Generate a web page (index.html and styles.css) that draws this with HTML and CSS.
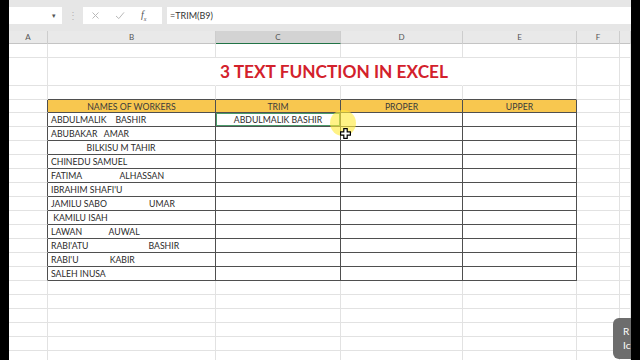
FILE: index.html
```html
<!DOCTYPE html>
<html lang="en">
<head>
    <meta charset="UTF-8">
    <meta name="viewport" content="width=device-width, initial-scale=1.0">
    <title>3 Text Function in Excel</title>
    <link rel="stylesheet" href="styles.css">
</head>
<body>
    <div class="screen">
        <!-- barra della formula -->
        <div class="formula-bar">
            <div class="name-box"><span class="arrow">&#9662;</span></div>
            <div class="grip">&#8942;</div>
            <div class="fx-box">
                <svg class="ico" width="9" height="9" viewBox="0 0 9 9"><path d="M1.5 1.5 L7.5 7.5 M7.5 1.5 L1.5 7.5" stroke="#b9b9b9" stroke-width="1" fill="none"/></svg>
                <svg class="ico" width="10" height="9" viewBox="0 0 10 9"><path d="M1 5 L3.8 7.6 L9 1.4" stroke="#b9b9b9" stroke-width="1" fill="none"/></svg>
                <span class="fx">f<sub>x</sub></span>
            </div>
            <div class="formula">=TRIM(B9)</div>
        </div>

        <div class="col-heads">
            <div class="ch">A</div>
            <div class="ch">B</div>
            <div class="ch active">C</div>
            <div class="ch">D</div>
            <div class="ch">E</div>
            <div class="ch">F</div>
            <div class="ch"></div>
        </div>

        <div class="sheet">
            <div class="row"><div class="c"></div><div class="c"></div><div class="c"></div><div class="c"></div><div class="c"></div><div class="c"></div><div class="c"></div></div>
            <div class="row tall"><div class="c"></div><div class="c no-r"></div><div class="c no-r"><span class="title">3 TEXT FUNCTION IN EXCEL</span></div><div class="c no-r"></div><div class="c"></div><div class="c"></div><div class="c"></div></div>
            <div class="row"><div class="c"></div><div class="c edge-b"></div><div class="c edge-b"></div><div class="c edge-b"></div><div class="c edge-b"></div><div class="c"></div><div class="c"></div></div>

            <div class="row head"><div class="c edge-r"></div><div class="c t hd">NAMES OF WORKERS</div><div class="c t hd">TRIM</div><div class="c t hd">PROPER</div><div class="c t hd">UPPER</div><div class="c"></div><div class="c"></div></div>

            <div class="row"><div class="c edge-r"></div><div class="c t">ABDULMALIK    BASHIR</div><div class="c t ctr sel">ABDULMALIK BASHIR</div><div class="c t"></div><div class="c t"></div><div class="c"></div><div class="c"></div></div>
            <div class="row"><div class="c edge-r"></div><div class="c t">ABUBAKAR   AMAR</div><div class="c t"></div><div class="c t"></div><div class="c t"></div><div class="c"></div><div class="c"></div></div>
            <div class="row"><div class="c edge-r"></div><div class="c t">                BILKISU M TAHIR</div><div class="c t"></div><div class="c t"></div><div class="c t"></div><div class="c"></div><div class="c"></div></div>
            <div class="row"><div class="c edge-r"></div><div class="c t">CHINEDU SAMUEL</div><div class="c t"></div><div class="c t"></div><div class="c t"></div><div class="c"></div><div class="c"></div></div>
            <div class="row"><div class="c edge-r"></div><div class="c t">FATIMA                 ALHASSAN</div><div class="c t"></div><div class="c t"></div><div class="c t"></div><div class="c"></div><div class="c"></div></div>
            <div class="row"><div class="c edge-r"></div><div class="c t">IBRAHIM SHAFI'U</div><div class="c t"></div><div class="c t"></div><div class="c t"></div><div class="c"></div><div class="c"></div></div>
            <div class="row"><div class="c edge-r"></div><div class="c t">JAMILU SABO                   UMAR</div><div class="c t"></div><div class="c t"></div><div class="c t"></div><div class="c"></div><div class="c"></div></div>
            <div class="row"><div class="c edge-r"></div><div class="c t"> KAMILU ISAH</div><div class="c t"></div><div class="c t"></div><div class="c t"></div><div class="c"></div><div class="c"></div></div>
            <div class="row"><div class="c edge-r"></div><div class="c t">LAWAN            AUWAL</div><div class="c t"></div><div class="c t"></div><div class="c t"></div><div class="c"></div><div class="c"></div></div>
            <div class="row"><div class="c edge-r"></div><div class="c t">RABI'ATU                           BASHIR</div><div class="c t"></div><div class="c t"></div><div class="c t"></div><div class="c"></div><div class="c"></div></div>
            <div class="row"><div class="c edge-r"></div><div class="c t">RABI'U              KABIR</div><div class="c t"></div><div class="c t"></div><div class="c t"></div><div class="c"></div><div class="c"></div></div>
            <div class="row"><div class="c edge-r"></div><div class="c t">SALEH INUSA</div><div class="c t"></div><div class="c t"></div><div class="c t"></div><div class="c"></div><div class="c"></div></div>

            <div class="row"><div class="c"></div><div class="c"></div><div class="c"></div><div class="c"></div><div class="c"></div><div class="c"></div><div class="c"></div></div>
            <div class="row"><div class="c"></div><div class="c"></div><div class="c"></div><div class="c"></div><div class="c"></div><div class="c"></div><div class="c"></div></div>
            <div class="row"><div class="c"></div><div class="c"></div><div class="c"></div><div class="c"></div><div class="c"></div><div class="c"></div><div class="c"></div></div>
            <div class="row"><div class="c"></div><div class="c"></div><div class="c"></div><div class="c"></div><div class="c"></div><div class="c"></div><div class="c"></div></div>
            <div class="row"><div class="c"></div><div class="c"></div><div class="c"></div><div class="c"></div><div class="c"></div><div class="c"></div><div class="c"></div></div>
            <div class="row"><div class="c"></div><div class="c"></div><div class="c"></div><div class="c"></div><div class="c"></div><div class="c"></div><div class="c"></div></div>
        </div>

        <!-- evidenziazione del puntatore -->
        <div class="spot"></div>
        <svg class="cursor" width="11" height="11" viewBox="0 0 11 11">
            <polygon points="3.8,0.6 7.2,0.6 7.2,3.8 10.4,3.8 10.4,7.2 7.2,7.2 7.2,10.4 3.8,10.4 3.8,7.2 0.6,7.2 0.6,3.8 3.8,3.8" fill="#fff" stroke="#000" stroke-width="1.2"/>
        </svg>
        <div class="badge">R<br>Ic</div>
    </div>
</body>
</html>
```

FILE: styles.css
```css
* {
    box-sizing: border-box;
}
body {
    margin: 0;
    background: #000;
    font-family: Lato, "Open Sans", sans-serif;
}
.screen {
    position: relative;
    margin-left: 9px;
    width: 622px;
    height: 360px;
    background: #fff;
    overflow: hidden;
}
.formula-bar {
    display: flex;
    height: 31px;
    padding-top: 7px;
    background: #e6e6e6;
}
.formula-bar > div {
    height: 17px;
}
.name-box {
    width: 53px;
    background: #fff;
    display: flex;
    justify-content: flex-end;
    align-items: center;
    padding-right: 6px;
}
.arrow {
    font-size: 7px;
    color: #555;
}
.grip {
    width: 21px;
    text-align: center;
    color: #b5b5b5;
    font-size: 10px;
    line-height: 17px;
}
.fx-box {
    width: 79px;
    background: #fff;
    display: flex;
    align-items: center;
    padding-left: 8px;
    gap: 15px;
}
.fx {
    font-family: "Liberation Serif", serif;
    font-style: italic;
    font-size: 10px;
    color: #555;
    margin-left: 1px;
}
.fx sub {
    font-size: 6px;
}
.formula {
    flex: 1;
    margin-left: 5px;
    background: #fff;
    font-size: 9px;
    line-height: 17px;
    padding-left: 3px;
    color: #333;
}
.col-heads, .row {
    display: grid;
    grid-template-columns: 39px 168px 125px 122px 114px 43px 1fr;
}
.col-heads {
    height: 13px;
    background: #e9e9e9;
    border-bottom: 1px solid #c4c4c4;
}
.ch {
    border-right: 1px solid #cdcdcd;
    text-align: center;
    font-size: 8px;
    line-height: 12px;
    color: #555;
}
.ch.active {
    background: #d3d3d3;
    border-bottom: 1px solid #217346;
}
.row {
    height: 14px;
}
.row.tall {
    height: 28px;
}
.row.head {
    height: 13px;
}
.c {
    border-right: 1px solid #e2e2e2;
    border-bottom: 1px solid #e2e2e2;
    padding: 1px 0 0 3px;
    font-size: 8.7px;
    line-height: 12px;
    white-space: pre;
    color: #2b2b2b;
}
.head .c {
    line-height: 11px;
}
.c.no-r {
    border-right-color: transparent;
}
.c.edge-r {
    border-right-color: #4f4f4f;
}
.c.edge-b {
    border-bottom-color: #4f4f4f;
}
.c.t {
    border-color: #4f4f4f;
}
.c.hd {
    background: #f8c74f;
    text-align: center;
    padding-left: 0;
    color: #3b3b3b;
}
.c.ctr {
    text-align: center;
    padding-left: 0;
}
.c.sel {
    box-shadow: inset 0 0 0 1px #4a9a6a;
}
.title {
    display: block;
    padding-left: 1px;
    font-size: 17.3px;
    font-weight: 700;
    line-height: 26px;
    color: #d3212b;
}
.spot {
    position: absolute;
    left: 321px;
    top: 110px;
    width: 26px;
    height: 26px;
    border-radius: 50%;
    background: rgba(255, 234, 60, 0.62);
}
.cursor {
    position: absolute;
    left: 331px;
    top: 128px;
}
.badge {
    position: absolute;
    left: 604px;
    top: 318px;
    width: 40px;
    height: 41px;
    border-radius: 6px;
    background: #6d6d6d;
    color: #fff;
    font-size: 10px;
    line-height: 14px;
    padding: 6px 0 0 10px;
}
```
